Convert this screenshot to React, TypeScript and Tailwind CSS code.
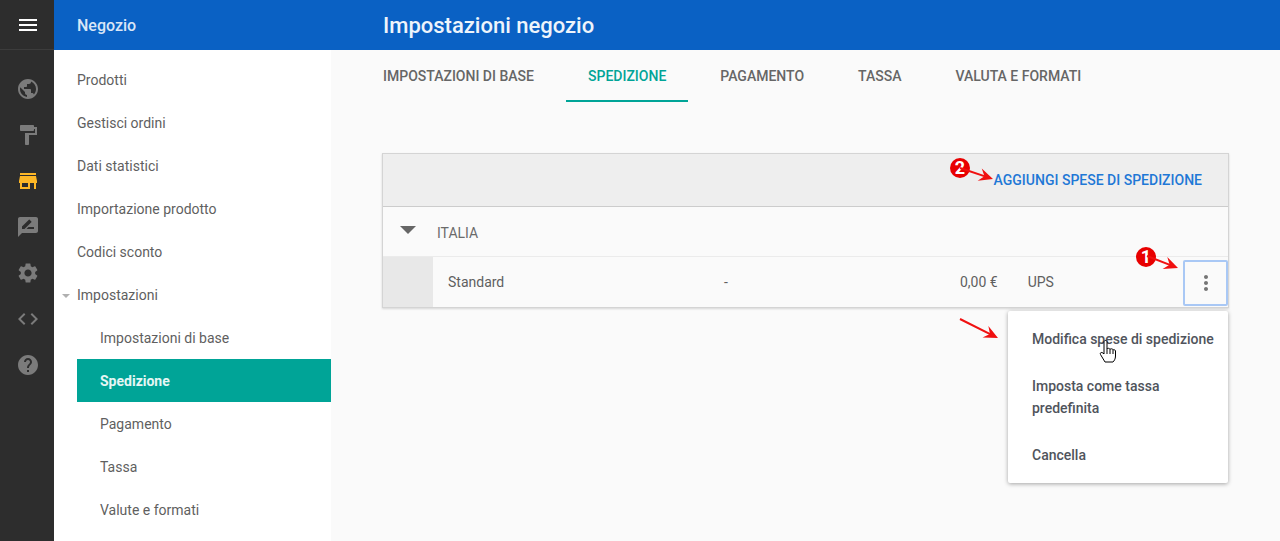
import React from "react";
import {
  MdMenu,
  MdPublic,
  MdFormatPaint,
  MdStore,
  MdRateReview,
  MdSettings,
  MdCode,
  MdHelp,
  MdMoreVert,
} from "react-icons/md";

const railIcons = [
  { Icon: MdPublic, active: false },
  { Icon: MdFormatPaint, active: false },
  { Icon: MdStore, active: true },
  { Icon: MdRateReview, active: false },
  { Icon: MdSettings, active: false },
  { Icon: MdCode, active: false },
  { Icon: MdHelp, active: false },
];

const topLinks = ["Prodotti", "Gestisci ordini", "Dati statistici", "Importazione prodotto", "Codici sconto"];
const subLinks = ["Impostazioni di base", "Spedizione", "Pagamento", "Tassa", "Valute e formati"];
const tabs = ["Impostazioni di base", "Spedizione", "Pagamento", "Tassa", "Valuta e formati"];

const Arrow: React.FC<{ className: string; x1: number; y1: number; x2: number; y2: number; w: number; h: number }> = ({
  className,
  x1,
  y1,
  x2,
  y2,
  w,
  h,
}) => {
  const a = Math.atan2(y2 - y1, x2 - x1);
  const p = (d: number, s: number) =>
    `${x2 - d * Math.cos(a) - s * Math.sin(a)},${y2 - d * Math.sin(a) + s * Math.cos(a)}`;
  return (
    <svg className={className} width={w} height={h} viewBox={`0 0 ${w} ${h}`}>
      <line x1={x1} y1={y1} x2={x2 - 6 * Math.cos(a)} y2={y2 - 6 * Math.sin(a)} stroke="#f01010" strokeWidth="2" />
      <polygon points={`${x2},${y2} ${p(14, 6.5)} ${p(9, 0)} ${p(14, -6.5)}`} fill="#f01010" />
    </svg>
  );
};

const Badge: React.FC<{ n: string; className: string }> = ({ n, className }) => (
  <div
    className={`absolute flex h-[20px] w-[20px] items-center justify-center rounded-full bg-[#e80000] text-[18px] font-bold leading-none text-white ${className}`}
  >
    {n}
  </div>
);

export default function App() {
  return (
    <div className="flex h-[541px] w-[1280px] overflow-hidden bg-[#fafafa] font-['Roboto',sans-serif] text-[14px] text-[#5f5f5f]">
      {/* dark rail */}
      <div className="flex w-[54px] shrink-0 flex-col items-center bg-[#2d2d2d]">
        <div className="flex h-[50px] w-full items-center justify-center border-b border-[#3c3c3c] pl-[2px]">
          <MdMenu size={24} className="text-white" />
        </div>
        <div className="mt-[27px] flex flex-col gap-[22px] pl-[2px]">
          {railIcons.map(({ Icon, active }, i) => (
            <Icon key={i} size={24} className={active ? "text-[#fdb726]" : "text-[#7b7b7b]"} />
          ))}
        </div>
      </div>

      {/* second column */}
      <div className="flex w-[277px] shrink-0 flex-col bg-white">
        <div className="flex h-[50px] items-center bg-[#0a61c4] pl-[23px] pt-[1px] text-[16px] font-medium text-[#d9e6f7]">
          Negozio
        </div>
        <div className="pt-[9px] text-[14px]">
          {topLinks.map((t) => (
            <div key={t} className="flex h-[43px] items-center pl-[23px]">
              {t}
            </div>
          ))}
          <div className="relative flex h-[43px] items-center pl-[23px]">
            <span className="absolute left-[8px] top-[20px] h-0 w-0 border-x-[4px] border-t-[4px] border-x-transparent border-t-[#b0b0b0]" />
            Impostazioni
          </div>
          {subLinks.map((t) => (
            <div
              key={t}
              className={
                t === "Spedizione"
                  ? "ml-[23px] -mt-px mb-px flex h-[43px] items-center bg-[#00a497] pl-[23px] pt-[2px] font-bold text-[#e6f6f4]"
                  : "ml-[23px] flex h-[43px] items-center pl-[23px]"
              }
            >
              {t}
            </div>
          ))}
        </div>
      </div>

      {/* main */}
      <div className="relative min-w-0 flex-1">
        <div className="flex h-[50px] items-center bg-[#0a61c4] pl-[52px] text-[22px] font-medium text-[#eef4fb]">
          Impostazioni negozio
        </div>
        <div className="flex h-[52px] gap-[10px] pl-[30px] pr-0">
          {tabs.map((t) => (
            <div
              key={t}
              className={
                t === "Spedizione"
                  ? "flex h-[52px] items-start border-b-2 border-[#00a497] px-[22px] pt-[18px] text-[14px] font-medium uppercase leading-[16px] text-[#00a497]"
                  : "flex h-[52px] items-start px-[22px] pt-[18px] text-[14px] font-medium uppercase leading-[16px] text-[#666666]"
              }
            >
              {t}
            </div>
          ))}
        </div>

        {/* shipping table */}
        <div className="ml-[51px] mt-[51px] w-[847px] border border-[#d4d4d4] bg-[#fafafa] shadow-[0_1px_2px_rgba(0,0,0,0.15)]">
          <div className="flex h-[53px] items-center justify-end border-b border-[#cccccc] bg-[#eeeeee] pr-[26px] pt-[1px] text-[14px] font-medium uppercase text-[#1f78d6]">
            Aggiungi spese di spedizione
          </div>
          <div className="flex h-[50px] items-center border-b border-[#ebebeb] pl-[17px]">
            <span className="-mt-[3px] h-0 w-0 border-x-[8px] border-t-[8px] border-x-transparent border-t-[#666666]" />
            <span className="ml-[21px] mt-[3px] text-[14px] uppercase text-[#6a6a6a]">Italia</span>
          </div>
          <div className="flex h-[50px] items-stretch text-[14px]">
            <div className="w-[50px] shrink-0 bg-[#e8e8e8]" />
            <div className="flex flex-1 items-center pl-[15px]">
              <span className="w-[276px]">Standard</span>
              <span className="w-[236px]">-</span>
              <span>
                0,00 €<span className="ml-[30px]">UPS</span>
              </span>
            </div>
            <div className="mb-[1px] mt-[3px] flex w-[45px] shrink-0 items-center justify-center rounded-[2px] border-2 border-[#a9c8f5]">
              <MdMoreVert size={24} className="text-[#757575]" />
            </div>
          </div>
        </div>

        {/* row menu */}
        <div className="absolute left-[677px] top-[311px] h-[172px] w-[220px] rounded-[2px] bg-white pl-[24px] pt-[17px] text-[14px] font-medium text-[#50545c] shadow-[0_1px_4px_rgba(0,0,0,0.35)]">
          <div className="leading-[22px] whitespace-nowrap">Modifica spese di spedizione</div>
          <div className="mt-[25px] leading-[22px] pr-[30px]">Imposta come tassa predefinita</div>
          <div className="mt-[25px] leading-[22px]">Cancella</div>
        </div>

        {/* annotations */}
        <Badge n="2" className="left-[619px] top-[158px]" />
        <Arrow className="absolute left-[625px] top-[162px]" w={40} h={24} x1={4} y1={6} x2={37} y2={17} />
        <Badge n="1" className="left-[805px] top-[247px]" />
        <Arrow className="absolute left-[812px] top-[252px]" w={40} h={24} x1={4} y1={4} x2={35} y2={16} />
        <Arrow className="absolute left-[625px] top-[315px]" w={44} h={30} x1={4} y1={4} x2={42} y2={23} />

        {/* hand cursor */}
        <svg className="absolute left-[768px] top-[339px]" width="18" height="24" viewBox="0 0 18 24">
          <path
            d="M5 3 C5 1 8 1 8 3 V10 C8 9 11 9 11 10.5 C11 9.5 14 9.5 14 11 C14 10.5 16.5 10.5 16.5 12 V17 C16.5 20 15 22 14 23 H6 L1.5 15.5 C0.5 13.5 3 12.5 5 15 Z"
            fill="#ffffff"
            stroke="#000000"
            strokeWidth="1"
          />
          <path d="M8 10 V15 M11 10.5 V15 M14 11 V15" stroke="#000000" strokeWidth="1" fill="none" />
        </svg>
      </div>
    </div>
  );
}
